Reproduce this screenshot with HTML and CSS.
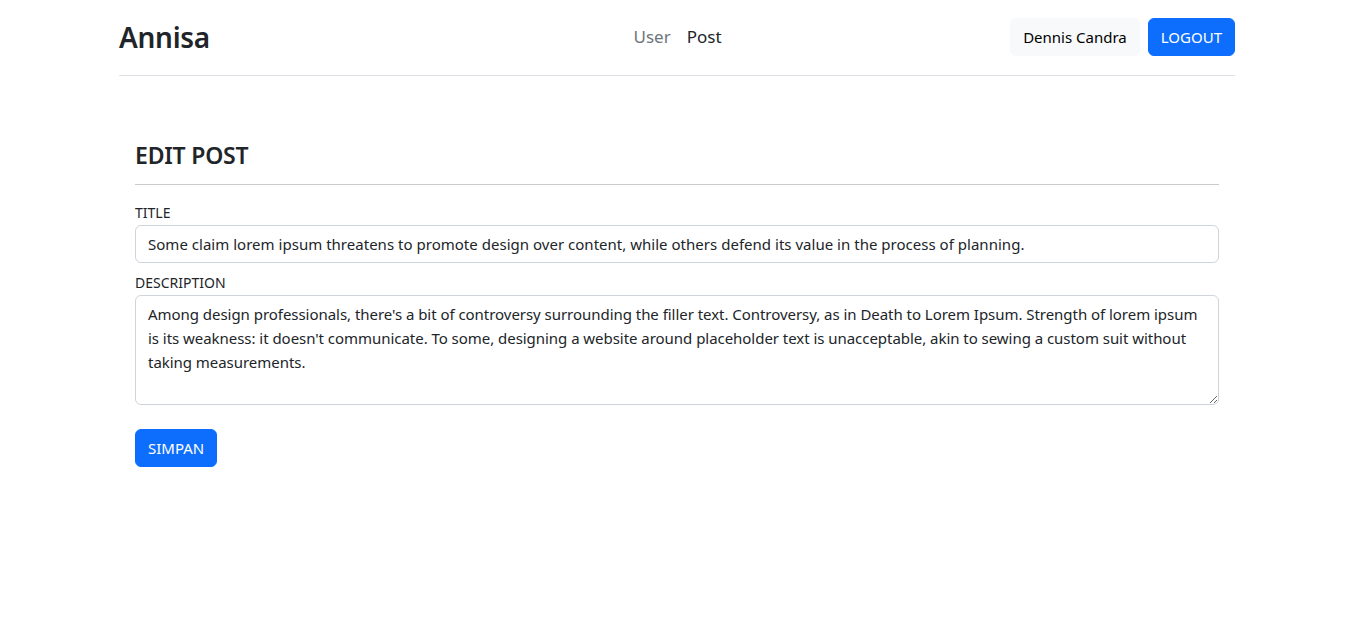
FILE: index.html
```html
<!DOCTYPE html>
<html lang="id">
<head>
<meta charset="utf-8">
<title>Annisa - Edit Post</title>
<link rel="stylesheet" href="styles.css">
</head>
<body>
<div class="container">
  <header class="header">
    <a class="brand" href="#">Annisa</a>
    <nav class="nav">
      <a class="nav-link muted" href="#">User</a>
      <a class="nav-link" href="#">Post</a>
    </nav>
    <div class="actions">
      <button class="btn btn-light">Dennis Candra</button>
      <button class="btn btn-primary">LOGOUT</button>
    </div>
  </header>
  <main class="content">
    <h2 class="title">EDIT POST</h2>
    <hr class="rule">
    <form class="form">
      <div class="field">
        <label class="label" for="title">TITLE</label>
        <input class="control" id="title" type="text" value="Some claim lorem ipsum threatens to promote design over content, while others defend its value in the process of planning.">
      </div>
      <div class="field">
        <label class="label" for="desc">DESCRIPTION</label>
        <textarea class="control area" id="desc">Among design professionals, there's a bit of controversy surrounding the filler text. Controversy, as in Death to Lorem Ipsum. Strength of lorem ipsum is its weakness: it doesn't communicate. To some, designing a website around placeholder text is unacceptable, akin to sewing a custom suit without taking measurements.</textarea>
      </div>
      <div class="submit-row">
        <button class="btn btn-primary" type="button">SIMPAN</button>
      </div>
    </form>
  </main>
</div>
</body>
</html>
```
FILE: styles.css
```css
* { box-sizing: border-box; }
html, body { margin: 0; padding: 0; background: #fff; }
body {
  font-family: "Noto Sans", "Open Sans", "Liberation Sans", sans-serif;
  font-size: 16px;
  line-height: 1.5;
  color: #212529;
}
.container {
  width: 1116px;
  margin: 0 auto;
  position: relative;
  left: 1px;
}
.header {
  display: flex;
  align-items: center;
  justify-content: space-between;
  height: 76px;
  border-bottom: 1px solid #dee2e6;
  padding-bottom: 1px;
}
.brand {
  font-size: 28px;
  font-weight: 600;
  color: #212529;
  text-decoration: none;
  letter-spacing: -0.3px;
  margin-top: -1px;
}
.nav {
  display: flex;
  gap: 16px;
  margin-left: 135px;
  margin-top: -1px;
}
.nav-link {
  font-size: 17px;
  color: #212529;
  text-decoration: none;
}
.nav-link.muted { color: #6c757d; }
.actions {
  display: flex;
  gap: 8px;
  margin-top: -1px;
}
.btn {
  font-family: inherit;
  font-size: 15px;
  line-height: 24px;
  padding: 6px 12px;
  border: 1px solid transparent;
  border-radius: 6px;
  cursor: pointer;
  height: 38px;
}
.btn-light { background: #f8f9fa; color: #000; border-color: #f8f9fa; }
.btn-primary { background: #0d6efd; color: #fff; border-color: #0d6efd; }
.content {
  padding: 62px 16px 0;
}
.title {
  margin: 0;
  font-size: 23px;
  font-weight: 600;
  line-height: 34px;
  letter-spacing: -0.2px;
}
.rule {
  margin: 12px 0 14px;
  border: 0;
  border-top: 1px solid #c9cbce;
}
.form { display: flex; flex-direction: column; }
.field { display: flex; flex-direction: column; margin-bottom: 6px; }
.label {
  font-size: 14px;
  line-height: 24px;
  margin-top: 2px;
}
.control {
  font-family: inherit;
  font-size: 15px;
  line-height: 24px;
  color: #212529;
  padding: 6px 12px;
  border: 1px solid #ced4da;
  border-radius: 6px;
  width: 100%;
  height: 38px;
  background: #fff;
  letter-spacing: 0.02px;
}
.area {
  height: 110px;
  padding-top: 6px;
  resize: vertical;
  letter-spacing: -0.04px;
}
.submit-row { margin-top: 18px; }
```
